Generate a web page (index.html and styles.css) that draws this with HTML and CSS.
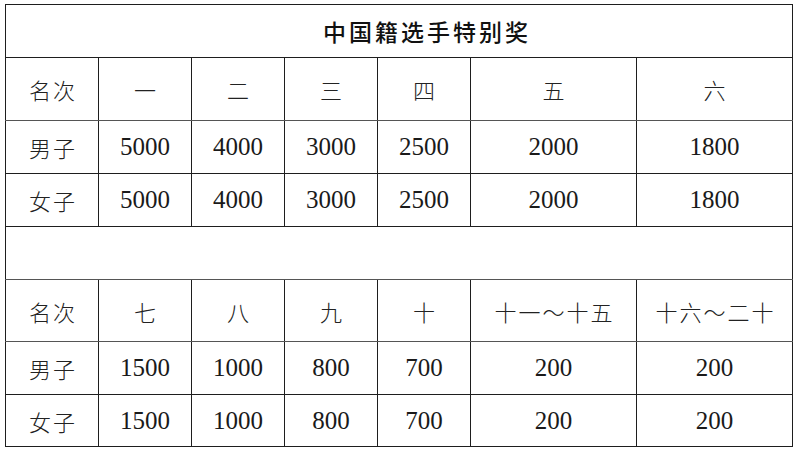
FILE: index.html
```html
<!DOCTYPE html>
<html lang="zh">
<head>
<meta charset="utf-8">
<link rel="stylesheet" href="styles.css">
</head>
<body>
<table class="prize">
  <colgroup>
    <col class="c1"><col class="c2"><col class="c3"><col class="c4"><col class="c5"><col class="c6"><col class="c7">
  </colgroup>
  <tr class="r-title"><td colspan="7" class="title">中国籍选手特别奖</td></tr>
  <tr class="r-head">
    <td class="cjk">名次</td><td class="cjk">一</td><td class="cjk">二</td><td class="cjk">三</td><td class="cjk">四</td><td class="cjk">五</td><td class="cjk">六</td>
  </tr>
  <tr class="r-data">
    <td class="cjk">男子</td><td class="num">5000</td><td class="num">4000</td><td class="num">3000</td><td class="num">2500</td><td class="num">2000</td><td class="num">1800</td>
  </tr>
  <tr class="r-data">
    <td class="cjk">女子</td><td class="num">5000</td><td class="num">4000</td><td class="num">3000</td><td class="num">2500</td><td class="num">2000</td><td class="num">1800</td>
  </tr>
  <tr class="r-blank"><td colspan="7"></td></tr>
  <tr class="r-head2">
    <td class="cjk">名次</td><td class="cjk">七</td><td class="cjk">八</td><td class="cjk">九</td><td class="cjk">十</td><td class="cjk">十一～十五</td><td class="cjk">十六～二十</td>
  </tr>
  <tr class="r-data">
    <td class="cjk">男子</td><td class="num">1500</td><td class="num">1000</td><td class="num">800</td><td class="num">700</td><td class="num">200</td><td class="num">200</td>
  </tr>
  <tr class="r-last">
    <td class="cjk">女子</td><td class="num">1500</td><td class="num">1000</td><td class="num">800</td><td class="num">700</td><td class="num">200</td><td class="num">200</td>
  </tr>
</table>
</body>
</html>
```

FILE: styles.css
```css
html, body {
  margin: 0;
  padding: 0;
  background: #ffffff;
}
body {
  padding: 4px 0 0 5px;
}
.prize {
  border-collapse: collapse;
  table-layout: fixed;
  width: 788px;
  color: #1a1a1a;
}
.c1, .c2, .c3, .c4, .c5 { width: 93px; }
.c6 { width: 166px; }
.c7 { width: 156px; }
.prize td {
  border: 1px solid #1e1e1e;
  padding: 0;
  text-align: center;
  vertical-align: middle;
}
.r-title td { height: 52px; }
.r-head td { height: 62px; }
.r-data td { height: 52px; }
.r-blank td { height: 52px; }
.r-head2 td { height: 61px; }
.r-last td { height: 51px; }
.r-head td, .r-head2 td, .r-blank td { border-bottom-color: #555; }
.title {
  font-family: "Noto Sans CJK SC", "Noto Sans", sans-serif;
  font-size: 23px;
  font-weight: 500;
  letter-spacing: 3px;
  padding-left: 56px !important;
  color: #111;
}
.cjk {
  font-family: "Noto Sans CJK SC", "Noto Sans", sans-serif;
  font-size: 22px;
  font-weight: 300;
  letter-spacing: 2px;
  text-indent: 2px;
  color: #222;
}
.num {
  font-family: "Liberation Serif", "Times New Roman", serif;
  font-size: 25px;
  color: #1a1a1a;
}
```
